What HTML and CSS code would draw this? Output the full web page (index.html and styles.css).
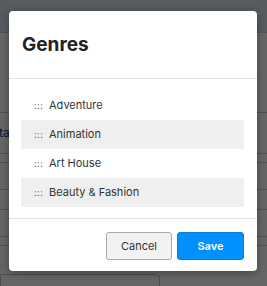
FILE: index.html
```html
<!DOCTYPE html>
<html lang="en">
<head>
  <meta charset="UTF-8">
  <title>Genres</title>
  <link rel="stylesheet" href="styles.css">
</head>
<body>
  <div class="page">
    <div class="topbar"></div>
    <div class="table">
      <div class="trow r1"></div>
      <div class="trow r2"><span class="cell">ta</span></div>
      <div class="trow r3"></div>
      <div class="trow r4"></div>
      <div class="trow r5"></div>
      <div class="trow r6"></div>
      <div class="trow r7"></div>
    </div>
    <div class="pager"></div>
  </div>

  <div class="overlay"></div>

  <div class="modal">
    <div class="modal-head">Genres</div>
    <ul class="genres">
      <li><span class="grip">:::</span>Adventure</li>
      <li class="alt"><span class="grip">:::</span>Animation</li>
      <li><span class="grip">:::</span>Art House</li>
      <li class="alt"><span class="grip">:::</span>Beauty &amp; Fashion</li>
    </ul>
    <div class="modal-foot">
      <button class="btn cancel">Cancel</button>
      <button class="btn save">Save</button>
    </div>
  </div>
</body>
</html>
```

FILE: styles.css
```css
body { margin: 0; font-family: Inter, "Noto Sans", sans-serif; background: #ffffff; width: 267px; height: 286px; overflow: hidden; position: relative; }

.page { height: 286px; }
.topbar { height: 32px; background: #dde6f0; }
.table { border-top: 1px solid #d0d0d0; }
.trow { border-bottom: 1px solid #c8c8c8; position: relative; }
.r1 { height: 79px; }
.r2 { height: 40px; }
.r3 { height: 8px; }
.r4 { height: 26px; }
.r5 { height: 19px; }
.r6 { height: 26px; }
.r7 { height: 8px; }
.cell { position: absolute; left: -1px; top: 12px; font-size: 12px; color: #0a3a7a; }
.pager { margin-top: 28px; width: 158px; height: 20px; border: 1px solid #c0c0c0; border-radius: 0 4px 0 0; background: #ffffff; }

.overlay { position: absolute; inset: 0; background: rgba(0, 0, 0, 0.6); }

.modal { position: absolute; left: 9px; top: 11px; width: 248px; background: #fff; border-radius: 4px; box-shadow: 0 2px 10px rgba(0,0,0,0.35); }
.modal-head { height: 67px; line-height: 68px; padding: 0 13px; font-size: 19px; font-weight: 700; color: #222; border-bottom: 1px solid #e2e2e2; }

.genres { list-style: none; margin: 0; padding: 12px 13px 11px 12px; }
.genres li { height: 29px; line-height: 29px; padding-left: 13px; font-size: 11px; color: #333; }
.genres li.alt { background: #efefef; }
.grip { display: inline-block; width: 15px; font-size: 9px; color: #555; letter-spacing: 0.5px; vertical-align: top; }

.modal-foot { display: flex; justify-content: flex-end; gap: 5px; padding: 13px 13px 11px; border-top: 1px solid #e2e2e2; }
.btn { height: 28px; border-radius: 3px; font-family: Inter, sans-serif; font-size: 11px; }
.cancel { width: 66px; background: #f2f2f2; border: 1px solid #a9a9a9; color: #333; }
.save { width: 67px; background: #0091ff; border: 1px solid #0a7ed8; color: #fff; font-weight: 600; }
```
